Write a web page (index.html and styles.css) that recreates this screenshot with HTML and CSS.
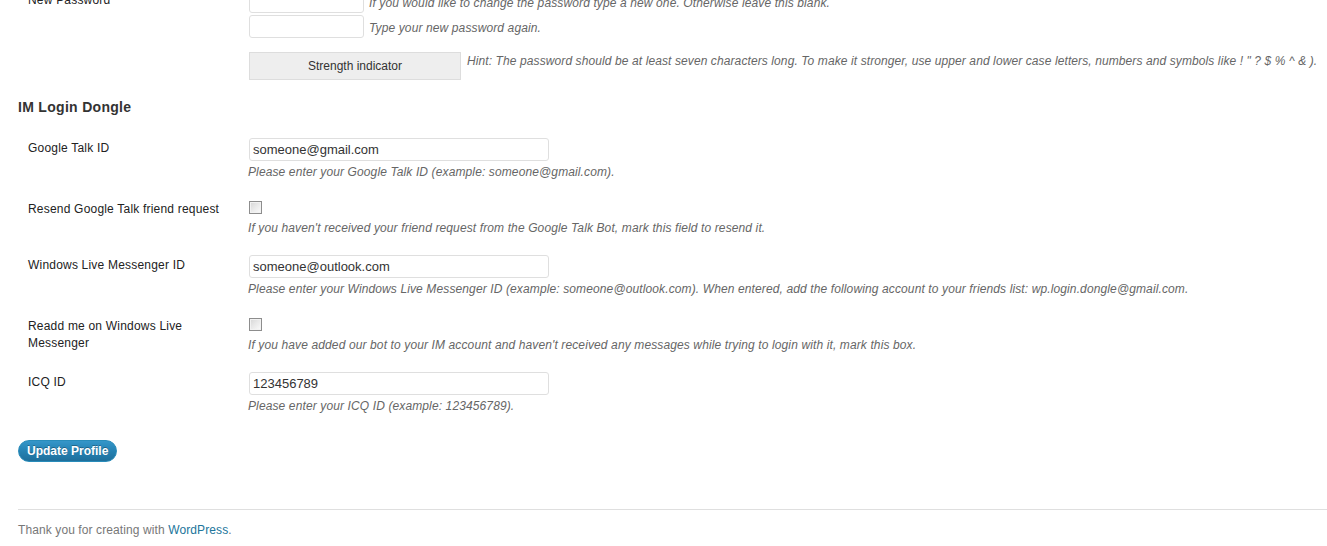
FILE: index.html
```html
<!DOCTYPE html>
<html lang="en">
<head>
<meta charset="utf-8">
<title>Profile</title>
<link rel="stylesheet" href="styles.css">
</head>
<body>
<div class="wrap">
  <div class="form-table">
    <div class="row">
      <div class="th"><label>New Password</label></div>
      <div class="td">
        <div class="field-line"><input type="password" class="pw"><span class="description">If you would like to change the password type a new one. Otherwise leave this blank.</span></div>
        <div class="field-line"><input type="password" class="pw"><span class="description">Type your new password again.</span></div>
        <div class="strength-row">
          <div class="strength">Strength indicator</div>
          <p class="description hint">Hint: The password should be at least seven characters long. To make it stronger, use upper and lower case letters, numbers and symbols like ! " ? $ % ^ &amp; ).</p>
        </div>
      </div>
    </div>
  </div>

  <h3 class="section-title">IM Login Dongle</h3>

  <div class="form-table">
    <div class="row">
      <div class="th"><label>Google Talk ID</label></div>
      <div class="td">
        <div class="field-line"><input type="text" class="regular-text" value="someone@gmail.com"></div>
        <div class="description">Please enter your Google Talk ID (example: someone@gmail.com).</div>
      </div>
    </div>
    <div class="row">
      <div class="th"><label>Resend Google Talk friend request</label></div>
      <div class="td">
        <div class="check-line"><input type="checkbox" class="check"></div>
        <div class="description">If you haven't received your friend request from the Google Talk Bot, mark this field to resend it.</div>
      </div>
    </div>
    <div class="row">
      <div class="th"><label>Windows Live Messenger ID</label></div>
      <div class="td">
        <div class="field-line"><input type="text" class="regular-text" value="someone@outlook.com"></div>
        <div class="description">Please enter your Windows Live Messenger ID (example: someone@outlook.com). When entered, add the following account to your friends list: wp.login.dongle@gmail.com.</div>
      </div>
    </div>
    <div class="row">
      <div class="th"><label>Readd me on Windows Live Messenger</label></div>
      <div class="td">
        <div class="check-line"><input type="checkbox" class="check"></div>
        <div class="description">If you have added our bot to your IM account and haven't received any messages while trying to login with it, mark this box.</div>
      </div>
    </div>
    <div class="row">
      <div class="th"><label>ICQ ID</label></div>
      <div class="td">
        <div class="field-line"><input type="text" class="regular-text" value="123456789"></div>
        <div class="description">Please enter your ICQ ID (example: 123456789).</div>
      </div>
    </div>
  </div>

  <p class="submit"><button type="button" class="button-primary">Update Profile</button></p>
</div>

<div class="footer">
  <p>Thank you for creating with <a href="#">WordPress</a>.</p>
</div>
</body>
</html>
```

FILE: styles.css
```css
html, body {
  margin: 0;
  padding: 0;
  background: #fff;
}

body {
  font-family: "Liberation Sans", Arial, sans-serif;
  font-size: 12px;
  color: #333;
  overflow: hidden;
}

.wrap {
  margin-top: -20px;
  padding-left: 18px;
}

.form-table {
  display: flex;
  flex-direction: column;
}

.row {
  display: grid;
  grid-template-columns: 220px 1fr;
}

.th {
  padding: 12px 10px 8px 10px;
  font-size: 12px;
  line-height: 17px;
  letter-spacing: 0.2px;
  color: #222;
  box-sizing: border-box;
}

.th label {
  display: block;
  width: 200px;
}

.td {
  padding: 8px 10px 7px 10px;
  font-size: 12px;
  line-height: 20px;
}

.field-line {
  display: flex;
  align-items: center;
  gap: 5px;
  padding-top: 2px;
  height: 23px;
}

.field-line input {
  box-sizing: border-box;
  height: 23px;
  margin: 0 0 0 1px;
  border: 1px solid #dfdfdf;
  border-radius: 3px;
  background: #fff;
  padding: 0 3px;
  font-family: "Liberation Sans", Arial, sans-serif;
  font-size: 13px;
  color: #333;
  outline: none;
}

.field-line .description {
  padding-top: 2px;
}

.pw {
  width: 115px;
}

.regular-text {
  width: 300px;
}

.description {
  font-style: italic;
  color: #666;
  font-size: 12px;
  line-height: 20px;
  letter-spacing: 0.12px;
  white-space: nowrap;
}

.td > .description {
  padding-top: 1px;
}

.strength-row {
  display: flex;
  align-items: flex-start;
  gap: 6px;
}

.strength {
  box-sizing: border-box;
  width: 212px;
  height: 28px;
  margin: 14px 0 5px 1px;
  padding: 3px 5px;
  background: #eee;
  border: 1px solid #ddd;
  text-align: center;
  line-height: 20px;
  color: #333;
  flex: none;
}

.hint {
  margin: 13px 0 0 0;
  letter-spacing: 0.1px;
}

.section-title {
  margin: 5px 0 11px 0;
  font-size: 14px;
  line-height: 20px;
  font-weight: bold;
  letter-spacing: 0.3px;
  color: #333;
}

.check-line {
  height: 20px;
  box-sizing: border-box;
  padding-top: 4px;
}

.check {
  -webkit-appearance: none;
  appearance: none;
  display: block;
  width: 13px;
  height: 13px;
  margin: 0 0 0 1px;
  box-sizing: border-box;
  border: 1px solid #8d8d8d;
  background: linear-gradient(135deg, #d6d6d6 0%, #eaeaea 50%, #fbfbfb 100%);
  box-shadow: inset 0 0 0 1px #f2f2f2;
}

.submit {
  margin: 17px 0 0 0;
  padding: 0;
}

.button-primary {
  box-sizing: border-box;
  height: 22px;
  padding: 0 8px;
  border: 1px solid #298cba;
  border-radius: 11px;
  background: linear-gradient(to bottom, #3596c9 0%, #2582b3 50%, #1f6f9b 100%);
  color: #fff;
  font-family: "Liberation Sans", Arial, sans-serif;
  font-size: 12px;
  font-weight: bold;
  line-height: 20px;
  text-shadow: 0 -1px 0 rgba(0, 0, 0, 0.3);
  cursor: pointer;
}

.footer {
  margin: 47px 0 0 18px;
  border-top: 1px solid #dfdfdf;
}

.footer p {
  margin: 0;
  padding: 10px 0 8px 0;
  line-height: 20px;
  font-size: 12px;
  letter-spacing: 0.1px;
  color: #777;
}

.footer a {
  color: #21759b;
  text-decoration: none;
}
```
